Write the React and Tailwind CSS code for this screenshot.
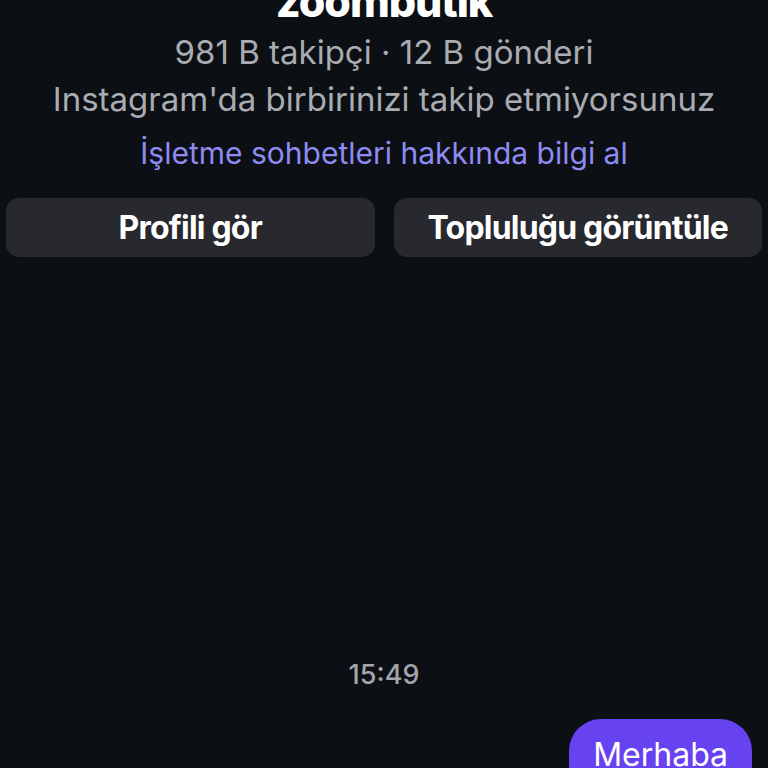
export default function App() {
  return (
    <div
      className="w-[768px] h-[768px] overflow-hidden bg-[#0c0f14] flex flex-col"
      style={{ fontFamily: 'Inter, "Noto Sans", sans-serif' }}
    >
      {/* Cabecera del perfil */}
      <div className="flex flex-col items-center -mt-[21px]">
        <h1 className="text-[43px] leading-[44px] font-extrabold text-white tracking-tight">zoombutik</h1>
        <p className="mt-[9px] text-[33px] leading-[40px] text-[#a9acb2]">981 B takipçi · 12 B gönderi</p>
        <p className="mt-[7px] text-[33px] leading-[40px] text-[#a9acb2]">Instagram'da birbirinizi takip etmiyorsunuz</p>
        <p className="mt-[15px] text-[30px] leading-[38px] text-[#8e8cf2]">İşletme sohbetleri hakkında bilgi al</p>
      </div>

      {/* Botones */}
      <div className="flex gap-[19px] px-[6px] mt-[26px]">
        <button className="flex-1 h-[59px] rounded-[13px] bg-[#27292e] text-white text-[32px] font-bold tracking-tight">
          Profili gör
        </button>
        <button className="flex-1 h-[59px] rounded-[13px] bg-[#27292e] text-white text-[32px] font-bold tracking-tight">
          Topluluğu görüntüle
        </button>
      </div>

      <div className="flex-1" />

      {/* Hora */}
      <div className="text-center text-[27px] leading-[34px] font-medium text-[#a3a5ab]">15:49</div>

      {/* Mensaje */}
      <div className="flex justify-end pr-[16px] mt-[27px] -mb-[33px]">
        <div className="bg-[#6642f0] rounded-[32px] px-[24px] pt-[17px] pb-[27px] text-white text-[32px] leading-[38px]">
          Merhaba
        </div>
      </div>
    </div>
  );
}
